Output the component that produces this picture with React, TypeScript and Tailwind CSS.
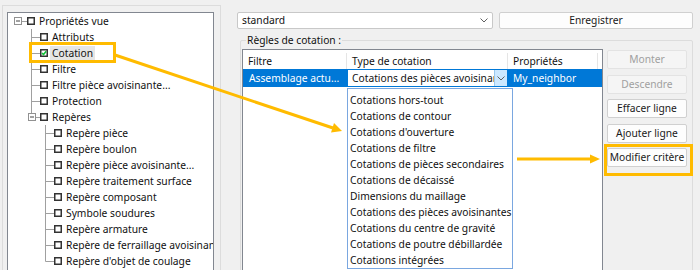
import React from "react";

type Row = { level: number; label: string; expander?: boolean; checked?: boolean; selected?: boolean; last?: boolean };

const rows: Row[] = [
  { level: 0, label: "Propriétés vue", expander: true },
  { level: 1, label: "Attributs" },
  { level: 1, label: "Cotation", checked: true, selected: true },
  { level: 1, label: "Filtre" },
  { level: 1, label: "Filtre pièce avoisinante..." },
  { level: 1, label: "Protection" },
  { level: 1, label: "Repères", expander: true, last: true },
  { level: 2, label: "Repère pièce" },
  { level: 2, label: "Repère boulon" },
  { level: 2, label: "Repère pièce avoisinante..." },
  { level: 2, label: "Repère traitement surface" },
  { level: 2, label: "Repère composant" },
  { level: 2, label: "Symbole soudures" },
  { level: 2, label: "Repère armature" },
  { level: 2, label: "Repère de ferraillage avoisinant" },
  { level: 2, label: "Repère d'objet de coulage", last: true },
];

const LINE = "#a0a0a0";

function Guides({ r }: { r: Row }) {
  if (r.level === 0) {
    return (
      <svg width={19} height={16} className="shrink-0">
        <rect x={6.5} y={4.5} width={7} height={7} fill="#fff" stroke="#919191" />
        <line x1={8} y1={8} x2={12} y2={8} stroke="#444" />
        <line x1={14} y1={8.5} x2={19} y2={8.5} stroke={LINE} />
      </svg>
    );
  }
  if (r.level === 1) {
    return (
      <svg width={32} height={16} className="shrink-0">
        {r.expander ? (
          <>
            <line x1={23.5} y1={0} x2={23.5} y2={4.5} stroke={LINE} />
            <rect x={20.5} y={4.5} width={7} height={7} fill="#fff" stroke="#919191" />
            <line x1={22} y1={8} x2={26} y2={8} stroke="#444" />
            <line x1={28} y1={8.5} x2={32} y2={8.5} stroke={LINE} />
          </>
        ) : (
          <>
            <line x1={23.5} y1={0} x2={23.5} y2={r.last ? 8.5 : 16} stroke={LINE} />
            <line x1={23.5} y1={8.5} x2={32} y2={8.5} stroke={LINE} />
          </>
        )}
      </svg>
    );
  }
  return (
    <svg width={46} height={16} className="shrink-0">
      <line x1={37.5} y1={0} x2={37.5} y2={r.last ? 8.5 : 16} stroke={LINE} />
      <line x1={37.5} y1={8.5} x2={46} y2={8.5} stroke={LINE} />
    </svg>
  );
}

function CheckBox({ checked }: { checked?: boolean }) {
  return (
    <svg width={8} height={8} className="shrink-0">
      <rect x={0.75} y={0.75} width={6.5} height={6.5} fill="#fff" stroke="#333" strokeWidth={1.5} />
      {checked && <path d="M2 4 L3.5 5.6 L6.2 2.2" fill="none" stroke="#12c23a" strokeWidth={1.6} />}
    </svg>
  );
}

function TreeRow({ r }: { r: Row }) {
  return (
    <div className="flex items-center h-4 whitespace-nowrap">
      <Guides r={r} />
      <CheckBox checked={r.checked} />
      <span className={r.selected ? "ml-[2px] px-[2px] bg-[#e5e5e5] leading-[14px]" : "ml-1 leading-[14px]"}>{r.label}</span>
    </div>
  );
}

const items = [
  "Cotations hors-tout",
  "Cotations de contour",
  "Cotations d'ouverture",
  "Cotations de filtre",
  "Cotations de pièces secondaires",
  "Cotations de décaissé",
  "Dimensions du maillage",
  "Cotations des pièces avoisinantes",
  "Cotations du centre de gravité",
  "Cotations de poutre débillardée",
  "Cotations intégrées",
];

function Btn({ label, disabled }: { label: string; disabled?: boolean }) {
  return (
    <div
      className={
        disabled
          ? "h-[19px] flex items-center justify-center rounded-[2px] border border-[#e3e3e3] bg-[#f5f5f5] text-[#a0a0a0]"
          : "h-[19px] flex items-center justify-center rounded-[2px] border border-[#d0d0d0] bg-[#fdfdfd] text-[#1a1a1a]"
      }
    >
      {label}
    </div>
  );
}

function Chevron() {
  return (
    <svg width={8} height={5} className="shrink-0">
      <path d="M0.5 0.5 L4 4 L7.5 0.5" fill="none" stroke="#606060" />
    </svg>
  );
}

export default function App() {
  return (
    <div className="w-[700px] h-[270px] bg-[#f0f0f0] relative overflow-hidden text-[10.25px] text-[#111] font-['Noto_Sans',sans-serif]">
      <div className="flex h-full">
        {/* left panel */}
        <div className="w-[221px] shrink-0 pl-[2px] pt-[5px]">
          <div className="h-full border-t border-l border-r border-[#dcdcdc] pl-[4px] pt-[6px] pr-[6px]">
            <div className="bg-white border border-[#828790] h-[300px] overflow-hidden">
              {rows.map((r, i) => (
                <TreeRow key={i} r={r} />
              ))}
            </div>
          </div>
        </div>

        {/* right panel */}
        <div className="flex-1 pl-[16px] pt-[12px] pr-[8px] flex flex-col">
          <div className="flex gap-[6px] h-[19px]">
            <div className="w-[256px] h-full bg-white border border-[#c8c8c8] rounded-[2px] flex items-center pl-[4px] pr-[4px]">
              <span className="flex-1">standard</span>
              <Chevron />
            </div>
            <div className="flex-1 h-full bg-[#fdfdfd] border border-[#d0d0d0] rounded-[2px] flex items-center justify-center text-[#1a1a1a]">
              Enregistrer
            </div>
          </div>

          <div className="mt-[11px] ml-[3px] flex-1 border border-[#dcdcdc] rounded-[2px] pl-[1px] pr-[5px]">
            <div className="-mt-[8px] ml-[4px] h-[14px] leading-[14px] px-[1px] bg-[#f0f0f0] w-fit">Règles de cotation :</div>
            <div className="flex mt-[2px]">
              {/* table */}
              <div className="w-[361px] h-[240px] bg-white border border-[#828790] flex flex-col">
                <div className="flex h-[19px] items-center pt-[3px]">
                  <div className="w-[104px] h-full border-r border-[#e5e5e5] pl-[5px] flex items-center">Filtre</div>
                  <div className="w-[161px] h-full border-r border-[#e5e5e5] pl-[5px] flex items-center">Type de cotation</div>
                  <div className="w-[90px] h-full border-r border-[#e5e5e5] pl-[5px] flex items-center">Propriétés</div>
                  <div className="flex-1" />
                </div>
                <div className="flex h-[18px]">
                  <div className="w-[104px] h-full bg-[#0078d7] text-white pl-[6px] flex items-center whitespace-nowrap">Assemblage actu...</div>
                  <div className="w-[161px] h-full border border-[#0078d7] bg-white flex items-center overflow-hidden">
                    <span className="flex-1 pl-[4px] whitespace-nowrap overflow-hidden">Cotations des pièces avoisinantes</span>
                    <div className="w-[13px] h-full bg-[#cce8ff] border-l border-[#99c9ef] flex items-center justify-center">
                      <Chevron />
                    </div>
                  </div>
                  <div className="flex-1 h-full bg-[#0078d7] text-white pl-[5px] flex items-center">My_neighbor</div>
                </div>
              </div>
              {/* buttons */}
              <div className="ml-[4px] w-[80px] flex flex-col gap-[5.5px] mt-[1px]">
                <Btn label="Monter" disabled />
                <Btn label="Descendre" disabled />
                <Btn label="Effacer ligne" />
                <Btn label="Ajouter ligne" />
                <Btn label="Modifier critère" />
              </div>
            </div>
          </div>
        </div>
      </div>

      {/* dropdown list */}
      <div className="absolute left-[347px] top-[88px] w-[166px] h-[181px] bg-white border border-[#7aa7e0] pt-[3px] pl-[2px]">
        {items.map((t) => (
          <div key={t} className="h-4 leading-4 whitespace-nowrap">
            {t}
          </div>
        ))}
      </div>

      {/* annotations */}
      <div className="absolute left-[29px] top-[42px] w-[87px] h-[21px] border-[3px] border-[#ffbb00]" />
      <div className="absolute left-[604px] top-[144px] w-[89px] h-[32px] border-[3px] border-[#ffbb00]" />
      <svg className="absolute left-0 top-0 pointer-events-none" width={700} height={270}>
        <line x1={115} y1={55} x2={333} y2={128} stroke="#ffbb00" strokeWidth={3} />
        <polygon points="342,131 331,132.5 334,123" fill="#ffbb00" />
        <line x1={517} y1={159} x2={591} y2={159} stroke="#ffbb00" strokeWidth={3} />
        <polygon points="600,159 590,154.5 590,163.5" fill="#ffbb00" />
      </svg>
    </div>
  );
}
